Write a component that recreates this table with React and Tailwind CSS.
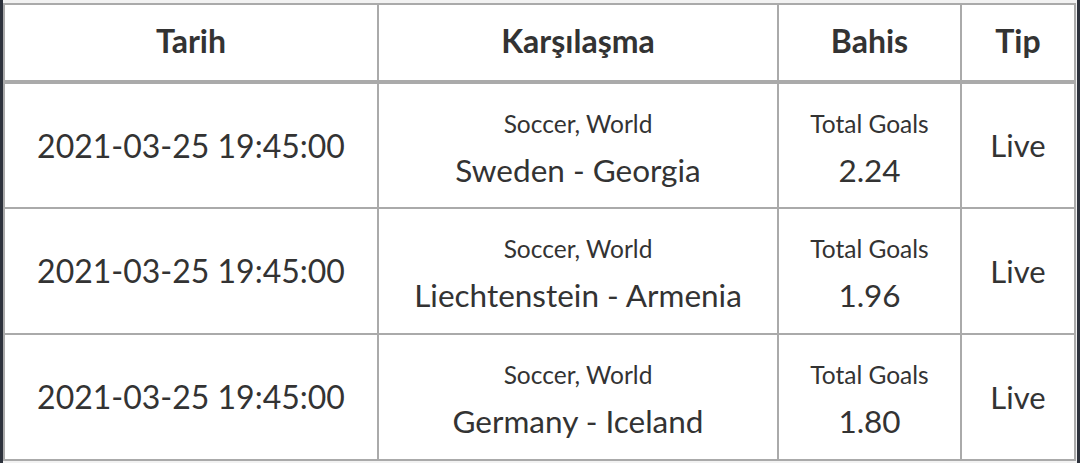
const rows = [
  { date: "2021-03-25 19:45:00", match: "Sweden - Georgia", odd: "2.24" },
  { date: "2021-03-25 19:45:00", match: "Liechtenstein - Armenia", odd: "1.96" },
  { date: "2021-03-25 19:45:00", match: "Germany - Iceland", odd: "1.80" },
]

export default function App() {
  return (
    <div className="w-[1080px] h-[463px] overflow-hidden bg-[#2d323c] px-[3px] font-['Lato',sans-serif] text-[#333]">
      <div className="h-full bg-[#f2f2f2] pt-[3px]">
        <table className="w-[1073px] border-collapse border-2 border-[#aaa] text-center">
          <thead>
            <tr className="h-[78px] border-b-[4px] border-[#aaa]">
              <th className="w-[374px] border-r-2 border-[#aaa] bg-white pb-[4px] text-[32px] font-bold">Tarih</th>
              <th className="w-[400px] border-r-2 border-[#aaa] bg-white pb-[4px] text-[32px] font-bold">Karşılaşma</th>
              <th className="w-[183px] border-r-2 border-[#aaa] bg-white pb-[4px] text-[32px] font-bold">Bahis</th>
              <th className="bg-white pb-[4px] text-[32px] font-bold">Tip</th>
            </tr>
          </thead>
          <tbody>
            {rows.map((r, i) => (
              <tr key={i} className="h-[126px] border-b-2 border-[#aaa] bg-white">
                <td className="border-r-2 border-[#aaa] text-[32px]">{r.date}</td>
                <td className="border-r-2 border-[#aaa] pt-2">
                  <div className="text-[24.5px] leading-[40px]">Soccer, World</div>
                  <div className="text-[31.5px] leading-[52px]">{r.match}</div>
                </td>
                <td className="border-r-2 border-[#aaa] pt-2">
                  <div className="text-[24.5px] leading-[40px]">Total Goals</div>
                  <div className="text-[31.5px] leading-[52px]">{r.odd}</div>
                </td>
                <td className="text-[31px]">Live</td>
              </tr>
            ))}
          </tbody>
        </table>
      </div>
    </div>
  )
}
